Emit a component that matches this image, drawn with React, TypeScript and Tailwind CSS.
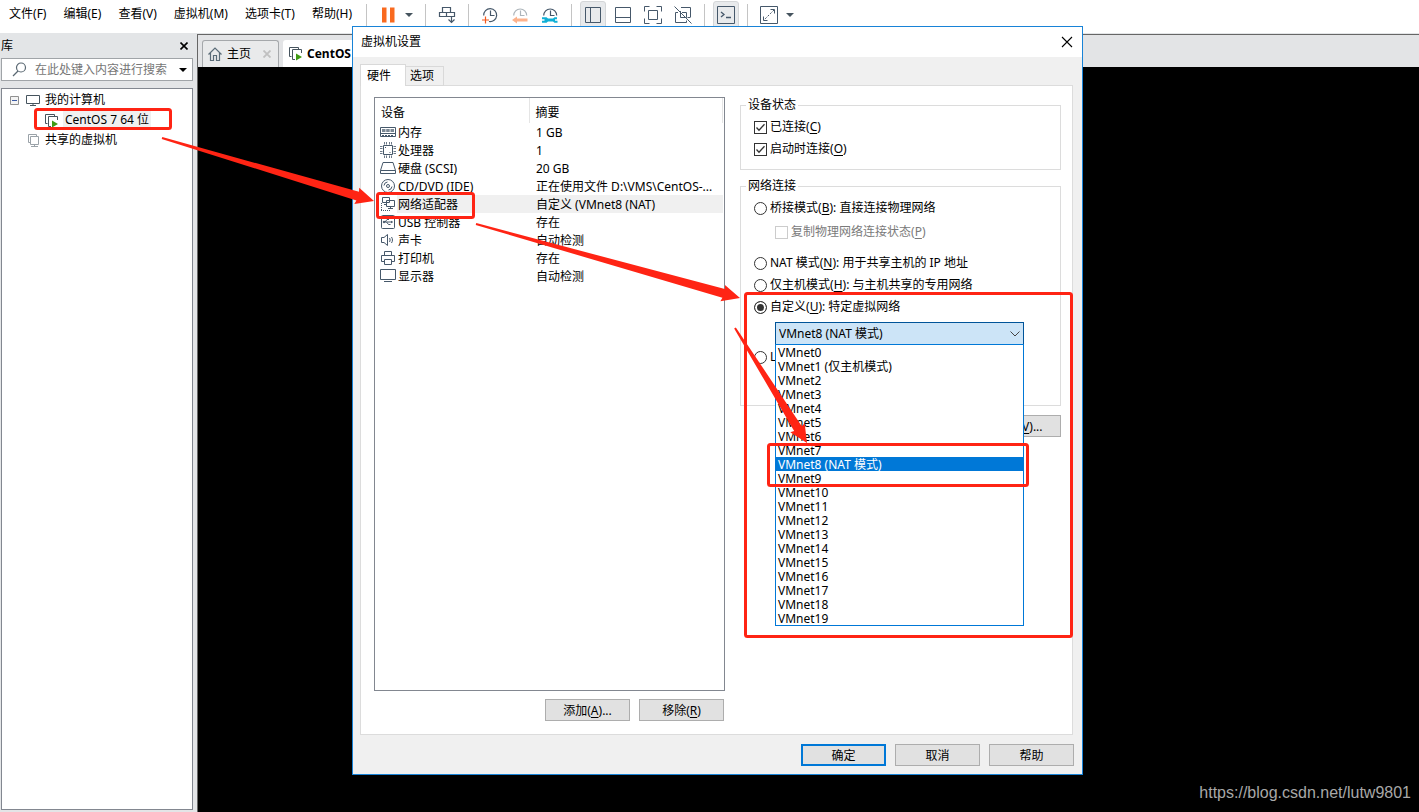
import { useState } from "react";
import type { ReactNode } from "react";

const MENUS = [
  ["文件", "F"],
  ["编辑", "E"],
  ["查看", "V"],
  ["虚拟机", "M"],
  ["选项卡", "T"],
  ["帮助", "H"],
];

const DEVICES: { icon: ReactNode; name: string; summary: string }[] = [
  { icon: <MemoryIcon />, name: "内存", summary: "1 GB" },
  { icon: <CpuIcon />, name: "处理器", summary: "1" },
  { icon: <DiskIcon />, name: "硬盘 (SCSI)", summary: "20 GB" },
  { icon: <CdIcon />, name: "CD/DVD (IDE)", summary: "正在使用文件 D:\\VMS\\CentOS-..." },
  { icon: <NetIcon />, name: "网络适配器", summary: "自定义 (VMnet8 (NAT)" },
  { icon: <UsbIcon />, name: "USB 控制器", summary: "存在" },
  { icon: <SoundIcon />, name: "声卡", summary: "自动检测" },
  { icon: <PrinterIcon />, name: "打印机", summary: "存在" },
  { icon: <DisplayIcon />, name: "显示器", summary: "自动检测" },
];

const VMNETS = Array.from({ length: 20 }, (_, i) => {
  if (i === 1) return "VMnet1 (仅主机模式)";
  if (i === 8) return "VMnet8 (NAT 模式)";
  return `VMnet${i}`;
});

export default function App() {
  return (
    <div className="relative flex h-screen flex-col overflow-hidden bg-white font-['Noto_Sans','Noto_Sans_CJK_SC',sans-serif] text-[12px] leading-[18px] text-black">
      <header className="flex h-[33px] shrink-0 items-start">
        <nav className="flex h-7 w-[360px] shrink-0 items-center gap-[17px] pl-[9px] whitespace-nowrap">
          {MENUS.map(([label, key]) => (
            <button key={key} type="button">
              {label}({key})
            </button>
          ))}
        </nav>
        <Toolbar />
      </header>

      <div className="flex min-h-0 flex-1 bg-[#e3e5e7]">
        <Library />
        <main className="mt-px flex min-w-0 flex-1 flex-col border-t border-l border-[#666] bg-black">
          <TabStrip />
        </main>
      </div>

      <SettingsDialog />

      <p className="absolute right-2 bottom-[7px] font-['Liberation_Sans',sans-serif] text-[16px] leading-6 text-[#a8a8a8]">
        https://blog.csdn.net/lutw9801
      </p>
      <Annotations />
    </div>
  );
}

/* =================== toolbar =================== */

function Sep() {
  return <span className="mx-1.5 h-[22px] w-px shrink-0 bg-[#c4c4c4]" />;
}

function Tool({ label, active, children }: { label: string; active?: boolean; children: ReactNode }) {
  return (
    <button type="button" aria-label={label} className="flex h-[30px] w-[30px] shrink-0 items-center justify-center">
      <span
        className={
          active
            ? "flex h-7 w-[26px] items-center justify-center rounded-[3px] border border-[#d4d6d8] bg-[#e8eaec]"
            : "flex"
        }
      >
        {children}
      </span>
    </button>
  );
}

function Caret({ label }: { label: string }) {
  return (
    <button type="button" aria-label={label} className="flex w-3 shrink-0 items-center justify-center">
      <svg width="8" height="4" viewBox="0 0 8 4" fill="#46545e">
        <path d="M0 0h8L4 4z" />
      </svg>
    </button>
  );
}

function Svg({ children, size = 18 }: { children: ReactNode; size?: number }) {
  return (
    <svg width={size} height={size} viewBox={`0 0 ${size} ${size}`} fill="none" stroke="#46586a" className="shrink-0" aria-hidden>
      {children}
    </svg>
  );
}

function Toolbar() {
  return (
    <div className="flex h-[30px] items-center">
      <Sep />
      <Tool label="挂起">
        <Svg>
          <path d="M3 1.500h4.500v15H3zM11 1.500h4.500v15H11z" fill="#f96a1f" stroke="none" />
        </Svg>
      </Tool>
      <Caret label="电源" />
      <span className="w-1" />
      <Sep />
      <Tool label="发送 Ctrl+Alt+Del">
        <Svg>
          <path d="M4.500 1.500h8v5h-8zM1.500 6.500h7v4h-7zM8.500 6.500h8v4h-8zM13.500 10.500v6M10.500 13.500l3 3 3-3" strokeWidth="1.200" />
        </Svg>
      </Tool>
      <Sep />
      <Tool label="拍摄快照">
        <Svg>
          <path d="M2.700 9.500a6.500 6.500 0 1 1 5.300 6M9.500 4.500v5h4" strokeWidth="1.200" />
          <path d="M4.500 10.500v7M1 14h7" stroke="#f4581c" strokeWidth="1.200" />
        </Svg>
      </Tool>
      <Tool label="恢复快照">
        <Svg>
          <path d="M2.700 9.500a6.500 6.500 0 1 1 13 0M9.500 4.500v5h4" stroke="#adb5bb" strokeWidth="1.200" />
          <path d="M1 14l5-3.500v2h10.500v3H6v2z" fill="#fdb28c" stroke="none" />
        </Svg>
      </Tool>
      <Tool label="管理快照">
        <Svg>
          <path d="M2.700 9.500a6.500 6.500 0 1 1 13 0M9.500 4.500v5h4" strokeWidth="1.200" />
          <path d="M1 11.200h4.500L7 12.500h5l1.500-1.300H16v2h-2v1.600h2.500v2h-3L12 15.500H7l-1.500 1.300H1v-2h2.500v-1.600H1z" fill="#0fb0d6" stroke="none" />
        </Svg>
      </Tool>
      <Sep />
      <Tool label="显示库" active>
        <Svg>
          <path d="M1.500 1.500h15v15h-15zM6.500 1.500v15" />
        </Svg>
      </Tool>
      <Tool label="缩略图栏">
        <Svg>
          <path d="M1.500 1.500h15v15h-15zM1.500 11.500h15" />
        </Svg>
      </Tool>
      <Tool label="全屏">
        <Svg>
          <path d="M4.500 4.500h9v9h-9zM.5 5.500v-5h5M12.500.5h5v5M17.500 12.500v5h-5M5.500 17.500h-5v-5" />
        </Svg>
      </Tool>
      <Tool label="Unity">
        <Svg>
          <path d="M7 1.500h9.500v9.500M13.500 11.500h3M6.500 5v6.500h6v-5H8M4 6.500H1.500v10h11v-2" />
          <path d="M.5.5l17 17" />
        </Svg>
      </Tool>
      <Sep />
      <Tool label="控制台" active>
        <Svg>
          <path d="M.5.5h17v17H.5z" />
          <path d="M4 6l3 2.500L4 11M9 11.500h5" strokeWidth="1.300" />
        </Svg>
      </Tool>
      <Sep />
      <Tool label="拉伸">
        <Svg>
          <path d="M.5.5h17v17H.5z" />
          <path d="M10.500 3.500h4v4M3.500 10.500v4h4" />
          <path d="M14 4L4 14" strokeDasharray="2 1.500" />
        </Svg>
      </Tool>
      <Caret label="拉伸选项" />
    </div>
  );
}

/* =================== library =================== */

function Library() {
  return (
    <aside className="flex w-[197px] shrink-0 flex-col pr-1 pb-0.5 pl-px">
      <div className="flex h-[25px] items-center justify-between pr-[3px]">
        <h2>库</h2>
        <button type="button" aria-label="关闭" className="flex w-3 justify-center">
          <svg width="8" height="8" viewBox="0 0 8 8" stroke="#000" strokeWidth="1.600">
            <path d="M.5.5l7 7M7.500.5l-7 7" />
          </svg>
        </button>
      </div>
      <div className="flex h-[23px] shrink-0 items-center border border-[#a0a4a8] bg-white pl-2.5">
        <svg width="15" height="15" viewBox="0 0 15 15" fill="none" stroke="#5a6872" strokeWidth="1.200" aria-hidden>
          <circle cx="9" cy="5.500" r="4.500" />
          <path d="M6 9l-5 5" />
        </svg>
        <input
          type="text"
          aria-label="搜索"
          placeholder="在此处键入内容进行搜索"
          className="ml-2 min-w-0 flex-1 outline-none placeholder:text-[#767676]"
        />
        <button type="button" aria-label="搜索选项" className="flex w-[18px] justify-center">
          <svg width="8" height="4" viewBox="0 0 8 4">
            <path d="M0 0h8L4 4z" />
          </svg>
        </button>
      </div>
      <ul className="mt-[7px] flex-1 border border-[#828790] bg-white pt-px">
        <li className="flex h-5 items-center pl-2">
          <svg width="9" height="9" viewBox="0 0 9 9" fill="#f4f4f4" aria-hidden>
            <path d="M.5.5h8v8h-8z" stroke="#919191" />
            <path d="M2 4.500h5" stroke="#3b5ba5" />
          </svg>
          <svg width="15" height="13" viewBox="0 0 15 13" fill="none" stroke="#46545e" className="mr-1 ml-[7px]" aria-hidden>
            <path d="M.5 1.500h13v8H.5zM4 11.500h6M7 9.500v2" />
          </svg>
          我的计算机
        </li>
        <li className="flex h-5 items-center pl-[42px]">
          <VmIcon />
          <span className="ml-[3px] bg-[#f0f0f0] px-0.5">CentOS 7 64 位</span>
        </li>
        <li className="flex h-5 items-center pl-[25px]">
          <svg width="14" height="15" viewBox="0 0 14 15" fill="none" stroke="#9aa2a8" className="mr-1" aria-hidden>
            <path d="M3.500 9.500h-2v-8h8v2M3.500 3.500h8v8h-8zM7.500 11.500v2M4 13.500h7" />
          </svg>
          共享的虚拟机
        </li>
      </ul>
    </aside>
  );
}

function VmIcon() {
  return (
    <svg width="16" height="15" viewBox="0 0 16 15" fill="none" stroke="#46545e" aria-hidden>
      <path d="M3.500 10.500h-2v-9h9v2" />
      <path d="M7 13.500H4.500v-10h9V7" />
      <path d="M8 7.500v7l6-3.500z" fill="#3f9a12" stroke="none" />
    </svg>
  );
}

function TabStrip() {
  return (
    <div className="flex h-8 shrink-0 items-end gap-1 bg-[#e3e4e6] pl-1">
      <div className="flex h-[27px] w-[77px] items-center rounded-t-[3px] border border-b-0 border-[#a5a8ab] bg-[#e9eaeb] pl-[5px]">
        <svg width="14" height="14" viewBox="0 0 14 14" fill="none" stroke="#5b6c78" strokeWidth="1.200" aria-hidden>
          <path d="M.5 7.500L7 1l6.500 6.500M2.500 6v7.500h3V8.500h3v5h3V6" />
        </svg>
        <span className="ml-[5px]">主页</span>
        <button type="button" aria-label="关闭主页" className="ml-3">
          <svg width="8" height="8" viewBox="0 0 8 8" stroke="#c0c0c0" strokeWidth="1.800">
            <path d="M.5.5l7 7M7.500.5l-7 7" />
          </svg>
        </button>
      </div>
      <div className="flex h-[27px] items-center rounded-t-[3px] bg-white px-[5px] font-bold">
        <VmIcon />
        <span className="ml-[3px]">CentOS</span>
      </div>
    </div>
  );
}

/* =================== dialog =================== */

function PushButton({ children, primary }: { children: ReactNode; primary?: boolean }) {
  return (
    <button
      type="button"
      className={
        primary
          ? "h-[22px] w-[85px] border-2 border-[#0078d7] bg-[#e1e1e1] pt-0.5 leading-4"
          : "h-[22px] w-[85px] border border-[#adadad] bg-[#e1e1e1] pt-0.5 leading-4"
      }
    >
      {children}
    </button>
  );
}

// подчёркнутая клавиша доступа
function Key({ k }: { k: string }) {
  return (
    <>
      (<span className="underline underline-offset-2">{k}</span>)
    </>
  );
}

function Check({ children, checked, disabled }: { children: ReactNode; checked?: boolean; disabled?: boolean }) {
  const [on, setOn] = useState(!!checked);
  return (
    <label className={disabled ? "flex h-[22px] items-center gap-[3px] text-[#7a7a7a]" : "flex h-[22px] items-center gap-[3px]"}>
      <span className="grid">
        <input
          type="checkbox"
          checked={on}
          disabled={disabled}
          onChange={() => setOn(!on)}
          className="h-[13px] w-[13px] appearance-none border border-[#333] bg-white [grid-area:1/1] disabled:border-[#ccc]"
        />
        {on && (
          <svg width="13" height="13" viewBox="0 0 13 13" fill="none" stroke="#333" strokeWidth="1.300" className="pointer-events-none [grid-area:1/1]">
            <path d="M2.500 6.500L5 9.200l5.500-6" />
          </svg>
        )}
      </span>
      <span>{children}</span>
    </label>
  );
}

function Radio({ children, value, mode, setMode }: { children: ReactNode; value: string; mode: string; setMode: (v: string) => void }) {
  return (
    <label className="flex h-[22px] items-center gap-[3px] whitespace-nowrap">
      <input
        type="radio"
        name="net"
        checked={mode === value}
        onChange={() => setMode(value)}
        className="h-[13px] w-[13px] shrink-0 appearance-none rounded-full border border-[#333] bg-white checked:bg-[#333] checked:shadow-[inset_0_0_0_2px_white]"
      />
      <span>{children}</span>
    </label>
  );
}

function SettingsDialog() {
  return (
    <section
      role="dialog"
      aria-label="虚拟机设置"
      className="absolute top-[26px] left-[352px] flex w-[731px] flex-col border border-[#1883d7] bg-[#f0f0f0]"
    >
      <div className="flex h-[30px] items-center justify-between bg-white pr-[9px] pl-2">
        <h1>虚拟机设置</h1>
        <button type="button" aria-label="关闭">
          <svg width="12" height="12" viewBox="0 0 12 12" stroke="#000" strokeWidth="1.100">
            <path d="M1 1l10 10M11 1L1 11" />
          </svg>
        </button>
      </div>

      <div className="pt-[7px] pr-[9px] pl-[7px]">
        <div role="tablist" className="relative z-10 -mb-px flex items-end">
          <button type="button" role="tab" aria-selected="true" className="h-[22px] w-[46px] border border-b-0 border-[#d9d9d9] bg-white pl-1.5 text-left">
            硬件
          </button>
          <button type="button" role="tab" aria-selected="false" className="h-5 w-[38px] border border-l-0 border-[#d9d9d9] bg-[#f0f0f0] pl-1 text-left">
            选项
          </button>
        </div>
        <div className="flex gap-[15px] border border-[#dcdcdc] bg-white pt-[11px] pr-[11px] pb-[13px] pl-[13px]">
          <Devices />
          <Details />
        </div>
      </div>

      <div className="flex justify-end gap-[9px] pt-[9px] pr-2 pb-2">
        <PushButton primary>确定</PushButton>
        <PushButton>取消</PushButton>
        <PushButton>帮助</PushButton>
      </div>
    </section>
  );
}

function Devices() {
  const [selected, setSelected] = useState(4);
  return (
    <div className="w-[351px] shrink-0">
      <div className="h-[594px] border border-[#828790] bg-white pr-px">
        <table className="w-full table-fixed border-collapse text-left leading-4 whitespace-nowrap">
          <thead>
            <tr className="h-[25px]">
              <th className="w-[154px] border-r border-[#e5e5e5] pt-1 pl-1.5 font-normal">设备</th>
              <th className="border-r border-[#e5e5e5] pt-1 pl-1.5 font-normal">摘要</th>
            </tr>
          </thead>
          <tbody>
            {DEVICES.map((d, i) => (
              <tr key={d.name} onClick={() => setSelected(i)} className="h-[18px]">
                <td className="p-0 pl-[5px]">
                  <div className="flex h-[18px] items-center">
                    {d.icon}
                    <span className={i === selected ? "ml-px flex-1 bg-[#f0f0f0] pt-0.5 pl-px" : "ml-px flex-1 pt-0.5 pl-px"}>
                      {d.name}
                    </span>
                  </div>
                </td>
                <td className={i === selected ? "bg-[#f0f0f0] p-0 pt-0.5 pl-[7px]" : "p-0 pt-0.5 pl-[7px]"}>{d.summary}</td>
              </tr>
            ))}
          </tbody>
        </table>
      </div>
      <div className="mt-2 flex justify-end gap-[9px] pr-px">
        <PushButton>
          添加
          <Key k="A" />
          ...
        </PushButton>
        <PushButton>
          移除
          <Key k="R" />
        </PushButton>
      </div>
    </div>
  );
}

function Details() {
  const [mode, setMode] = useState("custom");
  const [net, setNet] = useState(VMNETS[8]);
  return (
    <div className="min-w-0 flex-1">
      <fieldset className="-mt-px border border-[#dcdcdc] pt-0.5 pb-[9px] pl-[13px]">
        <legend className="-ml-2 h-[18px] px-0.5">设备状态</legend>
        <Check checked>
          已连接
          <Key k="C" />
        </Check>
        <Check checked>
          启动时连接
          <Key k="O" />
        </Check>
      </fieldset>

      <fieldset className="mt-[7px] border border-[#dcdcdc] pt-0.5 pb-[37px] pl-[13px]">
        <legend className="-ml-2 h-[18px] px-0.5">网络连接</legend>
        <Radio value="bridged" mode={mode} setMode={setMode}>
          桥接模式
          <Key k="B" />: 直接连接物理网络
        </Radio>
        <div className="mt-0.5 mb-[9px] ml-[21px]">
          <Check disabled>
            复制物理网络连接状态
            <Key k="P" />
          </Check>
        </div>
        <Radio value="nat" mode={mode} setMode={setMode}>
          NAT 模式
          <Key k="N" />: 用于共享主机的 IP 地址
        </Radio>
        <Radio value="host" mode={mode} setMode={setMode}>
          仅主机模式
          <Key k="H" />: 与主机共享的专用网络
        </Radio>
        <Radio value="custom" mode={mode} setMode={setMode}>
          自定义
          <Key k="U" />: 特定虚拟网络
        </Radio>
        <div className="relative mt-1 mb-px ml-[21px] w-[249px]">
          <select
            aria-label="特定虚拟网络"
            value={net}
            onChange={(e) => setNet(e.target.value)}
            className="block h-[23px] w-full appearance-none border border-[#005499] bg-[#cce4f7] pl-[3px]"
          >
            {VMNETS.map((n) => (
              <option key={n}>{n}</option>
            ))}
          </select>
          <svg width="10" height="6" viewBox="0 0 10 6" fill="none" stroke="#444" className="pointer-events-none absolute top-[9px] right-1">
            <path d="M.5.5L5 5 9.500.5" />
          </svg>
          <ul role="listbox" className="absolute top-[22px] left-0 z-10 w-full border border-[#0078d7] bg-white leading-[14px]">
            {VMNETS.map((n) => (
              <li
                key={n}
                role="option"
                aria-selected={n === net}
                onClick={() => setNet(n)}
                className={n === net ? "h-[14px] bg-[#0078d7] pt-px pl-0.5 text-white" : "h-[14px] pt-px pl-0.5"}
              >
                {n}
              </li>
            ))}
          </ul>
        </div>
        <Radio value="lan" mode={mode} setMode={setMode}>
          L
        </Radio>
      </fieldset>

      <div className="mt-[9px] flex justify-end">
        <PushButton>
          高级
          <Key k="V" />
          ...
        </PushButton>
      </div>
    </div>
  );
}

/* =================== device icons =================== */

function MemoryIcon() {
  return (
    <Svg size={16}>
      <path d="M.5 3.500h15v9H.5zM0 9.500h16" />
      <path d="M2 5h3.500v3H2zM6.200 5h3.500v3H6.200zM10.500 5H14v3h-3.500z" fill="#7b8894" stroke="none" />
      <path d="M2 11.500h12" strokeDasharray="2 1" />
    </Svg>
  );
}

function CpuIcon() {
  return (
    <Svg size={16}>
      <path d="M3.500 3.500h9v9h-9z" />
      <path
        d="M4.500 0v2.500M6.500 0v2.500M9.500 0v2.500M11.500 0v2.500M4.500 13.500V16M6.500 13.500V16M9.500 13.500V16M11.500 13.500V16M0 4.500h2.500M0 6.500h2.500M0 9.500h2.500M0 11.500h2.500M13.500 4.500H16M13.500 6.500H16M13.500 9.500H16M13.500 11.500H16"
        strokeOpacity="0.800"
      />
      <path d="M5 5.500h1M9.500 10.500h1" />
    </Svg>
  );
}

function DiskIcon() {
  return (
    <Svg size={16}>
      <path d="M.5 10.500L3 2.500h10l2.500 8v3H.500zM.5 10.500h15" />
    </Svg>
  );
}

function CdIcon() {
  return (
    <Svg size={16}>
      <circle cx="8" cy="8" r="6.500" />
      <circle cx="8" cy="8" r="1.500" />
      <path d="M4 7.500A4 4 0 0 1 7.500 4M12 8.500A4 4 0 0 1 8.500 12" />
    </Svg>
  );
}

function NetIcon() {
  return (
    <Svg size={16}>
      <path d="M2.500 1.500h7v5h-7zM4 8.500h3M6.500 4.500h8v6h-8z" fill="#fff" />
      <path d="M10.500 10.500v2M8 12.500h5" />
      <path d="M1.500 7v7M1 14.500h9" strokeDasharray="1 1" />
    </Svg>
  );
}

function UsbIcon() {
  return (
    <Svg size={16}>
      <rect x="1.500" y="1.500" width="13" height="13" rx="1" />
      <path d="M3.500 8h9M5 8l2-2.500h2M6.500 8l2 2.500h2" />
      <circle cx="4" cy="8" r="0.800" fill="#46586a" />
      <path d="M11 6.700L13 8l-2 1.300z" fill="#46586a" stroke="none" />
    </Svg>
  );
}

function SoundIcon() {
  return (
    <Svg size={16}>
      <path d="M1.500 5.500h2.500l3.500-3v11l-3.500-3H1.500z" />
      <path d="M9.500 6c.8 1.200.8 2.800 0 4M11.500 5c1.300 2 1.300 4 0 6" />
    </Svg>
  );
}

function PrinterIcon() {
  return (
    <Svg size={16}>
      <path d="M4.500 5.500v-4h7v4M4.500 11.500h-3v-6h13v6h-3M4.500 9.500h7v5h-7z" />
    </Svg>
  );
}

function DisplayIcon() {
  return (
    <Svg size={16}>
      <path d="M.5 1.500h15v10H.5zM4 13.500h8" />
    </Svg>
  );
}

/* =================== annotations =================== */

// длинная стрелка, расширяющаяся к наконечнику
function Arrow({ from, to }: { from: [number, number]; to: [number, number] }) {
  const dx = to[0] - from[0];
  const dy = to[1] - from[1];
  const len = Math.hypot(dx, dy);
  const at = (along: number, side: number) =>
    `${from[0] + (dx * along - dy * side) / len},${from[1] + (dy * along + dx * side) / len}`;
  const points = [
    at(0, -1),
    at(len - 17, -4.5),
    at(len - 18, -8.5),
    at(len, 0),
    at(len - 18, 8.5),
    at(len - 17, 4.5),
    at(0, 1),
  ].join(" ");
  return <polygon points={points} fill="#ff2414" />;
}

function Annotations() {
  return (
    <svg width="1419" height="812" viewBox="0 0 1419 812" className="pointer-events-none absolute top-0 left-0 z-20" aria-hidden>
      <g fill="none" stroke="#ff2414" strokeWidth="3">
        <rect x="35.500" y="109.500" width="135" height="19" rx="2" />
        <rect x="377.500" y="193.500" width="96" height="24" rx="2" />
        <rect x="745.500" y="293.500" width="326" height="343" rx="2" />
        <rect x="768.500" y="444.500" width="259" height="41" rx="2" />
      </g>
      <Arrow from={[162, 138]} to={[374, 201]} />
      <Arrow from={[476, 224]} to={[740, 298]} />
      <Arrow from={[735, 328]} to={[807, 443]} />
    </svg>
  );
}
